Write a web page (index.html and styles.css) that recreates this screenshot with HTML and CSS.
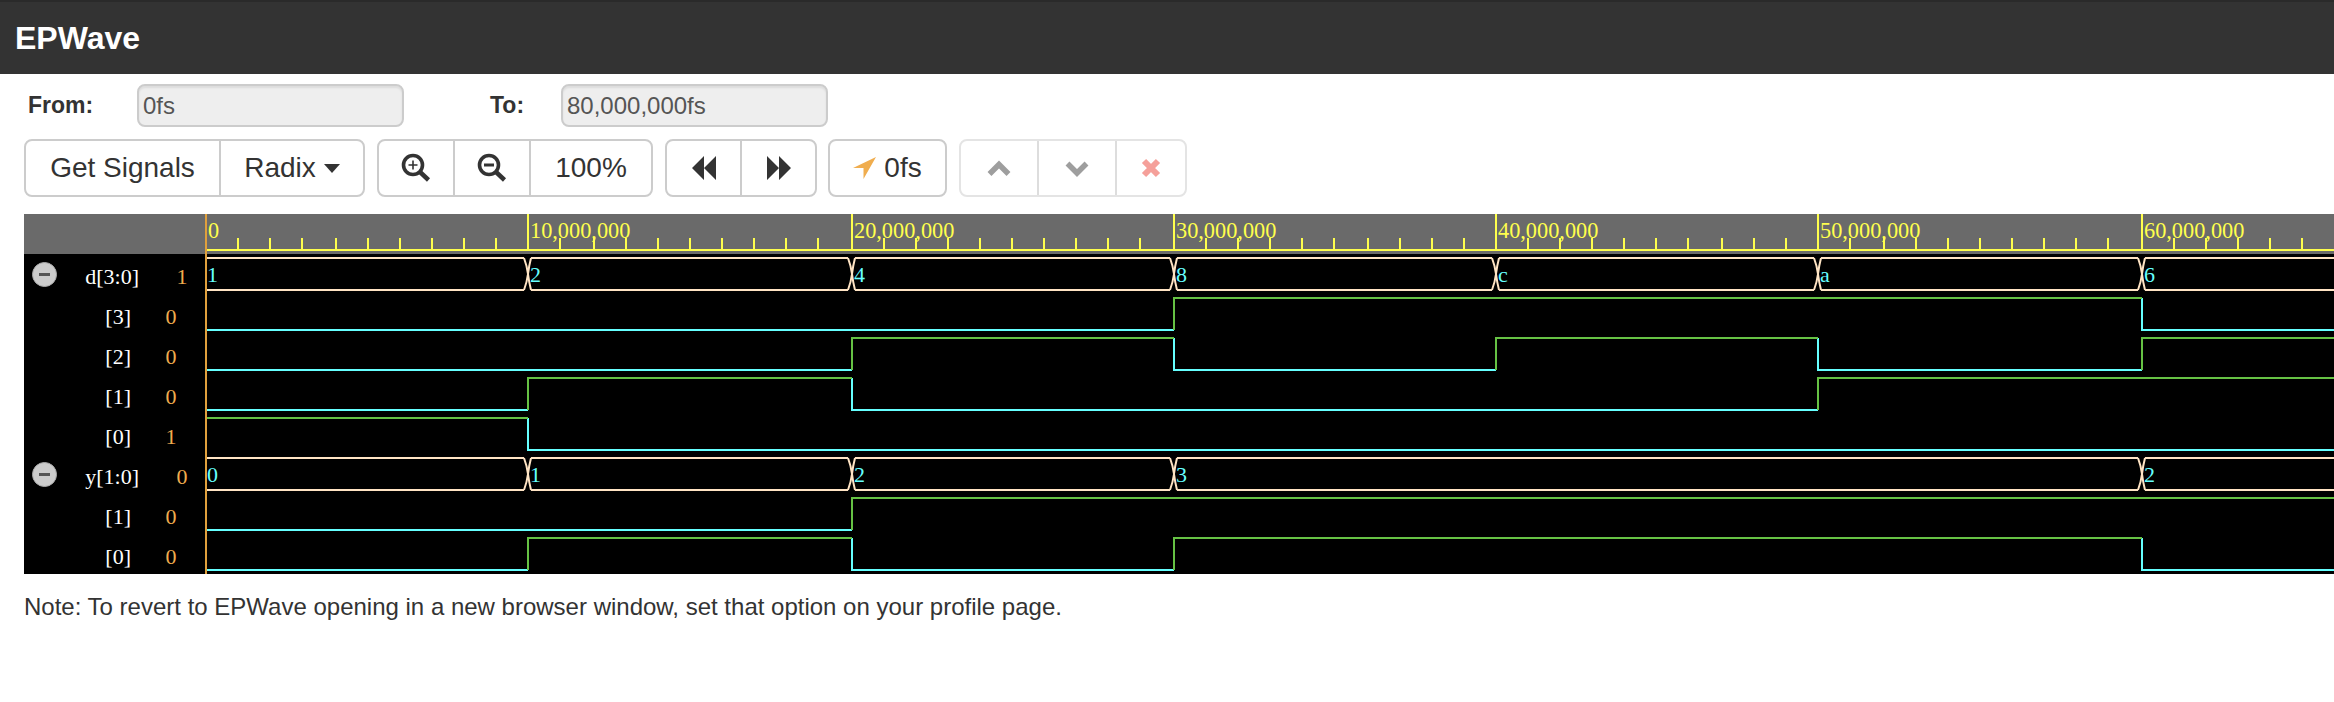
FILE: index.html
```html
<!DOCTYPE html>
<html>
<head>
	<meta charset="utf-8">
	<title>EPWave</title>
	<link rel="stylesheet" href="styles.css">
</head>

<body>

<header class="topbar">EPWave</header>

<div class="range">
	<label class="range-label from">From:</label>
	<div class="field">0fs</div>
	<label class="range-label to">To:</label>
	<div class="field">80,000,000fs</div>
</div>

<div class="toolbar">
	<div class="btn-group g-signals">
		<div class="btn w-get">Get Signals</div>
		<div class="btn w-radix">Radix<span class="caret"></span></div>
	</div>

	<div class="btn-group g-zoom">
		<div class="btn w-74">
			<svg class="icon" viewBox="0 0 32 32"><circle cx="13" cy="13" r="9.5" class="glass"/><path d="M20 20l8.5 8" class="handle"/><path d="M8.5 13h9M13 8.5v9" class="sign"/></svg>
		</div>
		<div class="btn w-76">
			<svg class="icon" viewBox="0 0 32 32"><circle cx="13" cy="13" r="9.5" class="glass"/><path d="M20 20l8.5 8" class="handle"/><path d="M8 13h10" class="sign wide"/></svg>
		</div>
		<div class="btn w-pct">100%</div>
	</div>

	<div class="btn-group g-step">
		<div class="btn w-74">
			<svg class="icon" viewBox="0 0 32 32"><path d="M4 16L16 4v24zM16 16L28 4v24z" fill="#333"/></svg>
		</div>
		<div class="btn w-76">
			<svg class="icon" viewBox="0 0 32 32"><path d="M4 4l12 12L4 28zM16 4l12 12-12 12z" fill="#333"/></svg>
		</div>
	</div>

	<div class="btn-group g-cursor">
		<div class="btn w-cursor">
			<svg class="icon-arrow" viewBox="0 0 24 24"><path d="M23 1L0 12h10.500v11z" fill="#f0ad4e"/></svg>0fs
		</div>
	</div>

	<div class="btn-group g-marks off">
		<div class="btn w-mark">
			<svg class="icon" viewBox="0 0 32 32"><path d="M6.500 22L16 12.500l9.500 9.500" class="chev"/></svg>
		</div>
		<div class="btn w-mark2">
			<svg class="icon" viewBox="0 0 32 32"><path d="M6.500 11.500L16 21l9.500-9.500" class="chev"/></svg>
		</div>
		<div class="btn w-mark3">
			<svg class="icon" viewBox="0 0 32 32"><path d="M9 9l14 14M23 9L9 23" class="cross"/></svg>
		</div>
	</div>
</div>

<div class="wave">
	<div class="signals">
		<div class="signals-head"></div>

		<div class="sig bus"><span class="toggle"></span><span class="sig-name">d[3:0]</span><span class="sig-val">1</span></div>
		<div class="sig"><span class="sig-name">[3]</span><span class="sig-val">0</span></div>
		<div class="sig"><span class="sig-name">[2]</span><span class="sig-val">0</span></div>
		<div class="sig"><span class="sig-name">[1]</span><span class="sig-val">0</span></div>
		<div class="sig"><span class="sig-name">[0]</span><span class="sig-val">1</span></div>
		<div class="sig bus"><span class="toggle"></span><span class="sig-name">y[1:0]</span><span class="sig-val">0</span></div>
		<div class="sig"><span class="sig-name">[1]</span><span class="sig-val">0</span></div>
		<div class="sig"><span class="sig-name">[0]</span><span class="sig-val">0</span></div>
	</div>

	<!-- viewBox keeps page coordinates: x is the page x, y is the page y -->
	<svg class="plot" viewBox="205 214 2129 360">
		<defs>
			<g id="xing" class="bus-line">
				<path d="M-4 258Q-1 266 0 274Q-1 282-4 290"/>
				<path d="M3 258Q1 266 0 274Q1 282 3 290"/>
			</g>
		</defs>

		<rect class="axis-bg" x="205" y="214" width="2129" height="40"/>
		<path class="axis" d="M207 250H2334"/>
		<path class="axis" d="M528 214V250M852 214V250M1174 214V250M1496 214V250M1818 214V250M2142 214V250"/>
		<path class="axis" d="M238 238V250M270 238V250M302 238V250M336 238V250M368 238V250M400 238V250M432 238V250M464 238V250M496 238V250
			M560 238V250M594 238V250M626 238V250M658 238V250M690 238V250M722 238V250M754 238V250M786 238V250M818 238V250
			M884 238V250M916 238V250M948 238V250M980 238V250M1012 238V250M1044 238V250M1076 238V250M1108 238V250M1140 238V250
			M1206 238V250M1238 238V250M1270 238V250M1302 238V250M1334 238V250M1368 238V250M1400 238V250M1432 238V250M1464 238V250
			M1528 238V250M1560 238V250M1592 238V250M1624 238V250M1656 238V250M1688 238V250M1722 238V250M1754 238V250M1786 238V250
			M1850 238V250M1884 238V250M1916 238V250M1948 238V250M1980 238V250M2012 238V250M2044 238V250M2076 238V250M2108 238V250
			M2174 238V250M2206 238V250M2238 238V250M2270 238V250M2302 238V250"/>

		<text class="time" x="208" y="238">0</text>
		<text class="time" x="530" y="238">10,000,000</text>
		<text class="time" x="854" y="238">20,000,000</text>
		<text class="time" x="1176" y="238">30,000,000</text>
		<text class="time" x="1498" y="238">40,000,000</text>
		<text class="time" x="1820" y="238">50,000,000</text>
		<text class="time" x="2144" y="238">60,000,000</text>

		<!-- d[3:0] -->
		<path class="bus-line" d="M207 258H524M531 258H848M855 258H1170M1177 258H1492M1499 258H1814M1821 258H2138M2145 258H2334"/>
		<path class="bus-line" d="M207 290H524M531 290H848M855 290H1170M1177 290H1492M1499 290H1814M1821 290H2138M2145 290H2334"/>
		<use href="#xing" x="528"/>
		<use href="#xing" x="852"/>
		<use href="#xing" x="1174"/>
		<use href="#xing" x="1496"/>
		<use href="#xing" x="1818"/>
		<use href="#xing" x="2142"/>
		<text class="bus-val" x="207" y="282">1</text>
		<text class="bus-val" x="530" y="282">2</text>
		<text class="bus-val" x="854" y="282">4</text>
		<text class="bus-val" x="1176" y="282">8</text>
		<text class="bus-val" x="1498" y="282">c</text>
		<text class="bus-val" x="1820" y="282">a</text>
		<text class="bus-val" x="2144" y="282">6</text>

		<!-- d[3] -->
		<path class="low" d="M207 330H1174M2142 298V330H2334"/>
		<path class="high" d="M1174 330V298H2142"/>
		<!-- d[2] -->
		<path class="low" d="M207 370H852M1174 338V370H1496M1818 338V370H2142"/>
		<path class="high" d="M852 370V338H1174M1496 370V338H1818M2142 370V338H2334"/>
		<!-- d[1] -->
		<path class="low" d="M207 410H528M852 378V410H1818"/>
		<path class="high" d="M528 410V378H852M1818 410V378H2334"/>
		<!-- d[0] -->
		<path class="low" d="M528 418V450H2334"/>
		<path class="high" d="M207 418H528"/>

		<!-- y[1:0] -->
		<path class="bus-line" d="M207 458H524M531 458H848M855 458H1170M1177 458H2138M2145 458H2334"/>
		<path class="bus-line" d="M207 490H524M531 490H848M855 490H1170M1177 490H2138M2145 490H2334"/>
		<use href="#xing" x="528" y="200"/>
		<use href="#xing" x="852" y="200"/>
		<use href="#xing" x="1174" y="200"/>
		<use href="#xing" x="2142" y="200"/>
		<text class="bus-val" x="207" y="482">0</text>
		<text class="bus-val" x="530" y="482">1</text>
		<text class="bus-val" x="854" y="482">2</text>
		<text class="bus-val" x="1176" y="482">3</text>
		<text class="bus-val" x="2144" y="482">2</text>

		<!-- y[1] -->
		<path class="low" d="M207 530H852"/>
		<path class="high" d="M852 530V498H2334"/>
		<!-- y[0] -->
		<path class="low" d="M207 570H528M852 538V570H1174M2142 538V570H2334"/>
		<path class="high" d="M528 570V538H852M1174 570V538H2142"/>

		<path class="cursor" d="M206 214V574"/>
	</svg>
</div>

<p class="note">Note: To revert to EPWave opening in a new browser window, set that option on your profile page.</p>

</body>

</html>
```

FILE: styles.css
```css
body {
	font-family: 'Liberation Sans', Arial, sans-serif;
	margin: 0;
	background: #fff;
	color: #333;
	overflow: hidden;
}

.topbar {
	box-sizing: border-box;
	height: 74px;
	padding-left: 15px;
	border-top: 2px solid #2a2a2a;
	background: #333;
	color: #fff;
	font-size: 32px;
	font-weight: bold;
	line-height: 72px;
}

.range {
	display: flex;
	align-items: center;
	margin-top: 10px;
	padding-left: 28px;
}

.range-label {
	font-size: 23px;
	font-weight: bold;
}

.range-label.from {
	width: 109px;
}

.range-label.to {
	width: 71px;
	margin-left: 86px;
}

.field {
	box-sizing: border-box;
	width: 267px;
	height: 43px;
	padding-left: 4px;
	border: 2px solid #ccc;
	border-radius: 8px;
	background: #eee;
	box-shadow: inset 0 2px 2px rgba(0, 0, 0, 0.075);
	color: #555;
	font-size: 24px;
	line-height: 39px;
}

.toolbar {
	display: flex;
	gap: 12px;
	margin-top: 12px;
	padding-left: 24px;
}

.btn-group {
	display: flex;
	box-sizing: border-box;
	height: 58px;
	border: 2px solid #ccc;
	border-radius: 8px;
	background: #fff;
}

.btn-group.off {
	border-color: #e4e4e4;
}

.btn {
	display: flex;
	align-items: center;
	justify-content: center;
	box-sizing: border-box;
	font-size: 28px;
	white-space: nowrap;
}

.btn + .btn {
	border-left: 2px solid #ccc;
}

.off .btn + .btn {
	border-left-color: #ddd;
}

.g-signals { width: 341px; }
.g-zoom { width: 276px; }
.g-step { width: 152px; }
.g-cursor { width: 119px; margin-left: -1px; }
.g-marks { width: 228px; }

.w-get { width: 193px; }
.w-radix { width: 144px; }
.w-74 { width: 74px; }
.w-76 { width: 76px; }
.w-pct { width: 122px; }
.w-cursor { width: 115px; }
.w-mark { width: 76px; }
.w-mark2 { width: 78px; }
.w-mark3 { width: 70px; }

.caret {
	width: 0;
	height: 0;
	margin-left: 8px;
	border-top: 9px solid #333;
	border-left: 8px solid transparent;
	border-right: 8px solid transparent;
}

.icon {
	width: 32px;
	height: 32px;
}

.icon-arrow {
	width: 24px;
	height: 24px;
	margin-right: 7px;
}

.glass,
.handle,
.sign,
.chev,
.cross {
	fill: none;
}

.glass {
	stroke: #333;
	stroke-width: 3.6;
}

.handle {
	stroke: #333;
	stroke-width: 4.5;
}

.sign {
	stroke: #333;
	stroke-width: 1.6;
}

.sign.wide {
	stroke-width: 3;
}

.chev {
	stroke: #9e9e9e;
	stroke-width: 5.5;
}

.cross {
	stroke: #f5a09a;
	stroke-width: 6;
}

.wave {
	display: flex;
	height: 360px;
	margin-top: 17px;
	margin-left: 24px;
	background: #000;
	overflow: hidden;
}

.signals {
	flex: 0 0 181px;
	font-family: 'Liberation Serif', 'Times New Roman', serif;
	font-size: 22px;
	color: #fff;
}

.signals-head {
	height: 40px;
	margin-bottom: 3px;
	background: #6a6a6a;
}

.sig {
	display: flex;
	align-items: center;
	height: 40px;
}

.sig-name {
	width: 107px;
	text-align: right;
}

.sig-val {
	width: 22px;
	margin-left: 29px;
	color: #f0ad4e;
	text-align: center;
}

.bus .sig-name {
	width: 82px;
}

.bus .sig-val {
	margin-left: 32px;
}

.toggle {
	display: flex;
	align-items: center;
	justify-content: center;
	box-sizing: border-box;
	width: 25px;
	height: 25px;
	margin: -6px 0 0 8px;
	border: 1px solid #aaa;
	border-radius: 50%;
	background: #ccc;
}

.toggle::after {
	content: "";
	width: 11px;
	height: 3px;
	background: #555;
}

.plot {
	flex: 1;
	height: 360px;
}

.axis-bg {
	fill: #6a6a6a;
}

.axis,
.bus-line,
.low,
.high,
.cursor {
	fill: none;
	stroke-width: 2;
}

.axis {
	stroke: #ffff4d;
}

.bus-line {
	stroke: #ffe4c4;
}

.low {
	stroke: #66ffff;
}

.high {
	stroke: #66c244;
}

.cursor {
	stroke: #e0a03c;
}

.time {
	font-family: 'Liberation Serif', 'Times New Roman', serif;
	font-size: 22.3px;
	fill: #ffff4d;
}

.bus-val {
	font-family: 'Liberation Serif', 'Times New Roman', serif;
	font-size: 22px;
	fill: #66ffff;
}

.note {
	margin: 19px 0 0 24px;
	font-size: 24px;
	line-height: 28px;
}
```
